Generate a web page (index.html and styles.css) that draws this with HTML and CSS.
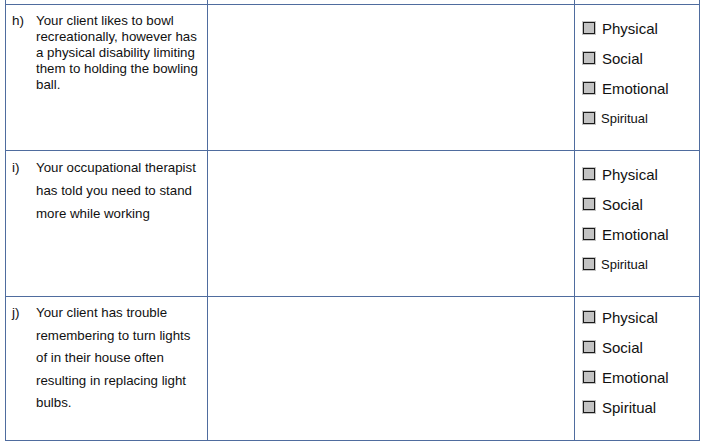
FILE: index.html
```html
<!DOCTYPE html>
<html>
<head>
<meta charset="utf-8">
<link rel="stylesheet" href="styles.css">
</head>
<body>
<div class="table">
  <div class="cell top"></div><div class="cell top"></div><div class="cell top"></div>

  <div class="cell q q-h"><span class="mark">h)</span><span class="text">Your client likes to bowl<br>recreationally, however has<br>a physical disability limiting<br>them to holding the bowling<br>ball.</span></div>
  <div class="cell"></div>
  <div class="cell opts">
    <div class="opt"><span class="box"><span class="inner"></span></span><span>Physical</span></div>
    <div class="opt"><span class="box"><span class="inner"></span></span><span>Social</span></div>
    <div class="opt"><span class="box"><span class="inner"></span></span><span>Emotional</span></div>
    <div class="opt small"><span class="box"><span class="inner"></span></span><span>Spiritual</span></div>
  </div>

  <div class="cell q q-i"><span class="mark">i)</span><span class="text">Your occupational therapist<br>has told you need to stand<br>more while working</span></div>
  <div class="cell"></div>
  <div class="cell opts">
    <div class="opt"><span class="box"><span class="inner"></span></span><span>Physical</span></div>
    <div class="opt"><span class="box"><span class="inner"></span></span><span>Social</span></div>
    <div class="opt"><span class="box"><span class="inner"></span></span><span>Emotional</span></div>
    <div class="opt small"><span class="box"><span class="inner"></span></span><span>Spiritual</span></div>
  </div>

  <div class="cell q q-j"><span class="mark">j)</span><span class="text">Your client has trouble<br>remembering to turn lights<br>of in their house often<br>resulting in replacing light<br>bulbs.</span></div>
  <div class="cell"></div>
  <div class="cell opts opts-j">
    <div class="opt"><span class="box"><span class="inner"></span></span><span>Physical</span></div>
    <div class="opt"><span class="box"><span class="inner"></span></span><span>Social</span></div>
    <div class="opt"><span class="box"><span class="inner"></span></span><span>Emotional</span></div>
    <div class="opt"><span class="box"><span class="inner"></span></span><span>Spiritual</span></div>
  </div>
</div>
</body>
</html>
```
FILE: styles.css
```css
html, body {
  margin: 0;
  padding: 0;
  background: #ffffff;
}
body {
  font-family: "Liberation Sans", Arial, sans-serif;
  color: #111111;
}
.table {
  margin-left: 5px;
  display: grid;
  grid-template-columns: 202px 367px 125px;
  grid-template-rows: 5px 146px 146px 144px;
  border-left: 1px solid #4f6c9e;
  width: 694px;
}
.cell {
  border-right: 1px solid #4f6c9e;
  border-bottom: 1px solid #4f6c9e;
  box-sizing: border-box;
}
.q {
  display: flex;
  font-size: 13.3px;
  padding: 8px 4px 0 6px;
}
.q-h { line-height: 16px; }
.q-i { line-height: 23px; padding-top: 5px; }
.q-j { line-height: 22.5px; padding-top: 5px; }
.mark {
  width: 24px;
  flex: none;
  font-size: 13.5px;
}
.opts {
  padding: 8px 0 0 7px;
  font-size: 15px;
}
.opts-j { padding-top: 5px; }
.opt {
  display: flex;
  align-items: center;
  height: 30px;
  gap: 6px;
}
.opt.small {
  font-size: 13px;
  gap: 5px;
}
.box {
  width: 14px;
  height: 14px;
  background: #c3c3c3;
  padding: 1px;
  box-sizing: border-box;
  flex: none;
}
.inner {
  display: block;
  width: 12px;
  height: 12px;
  border: 1px solid #1a1a1a;
  box-sizing: border-box;
  background: #c3c3c3;
}
```
